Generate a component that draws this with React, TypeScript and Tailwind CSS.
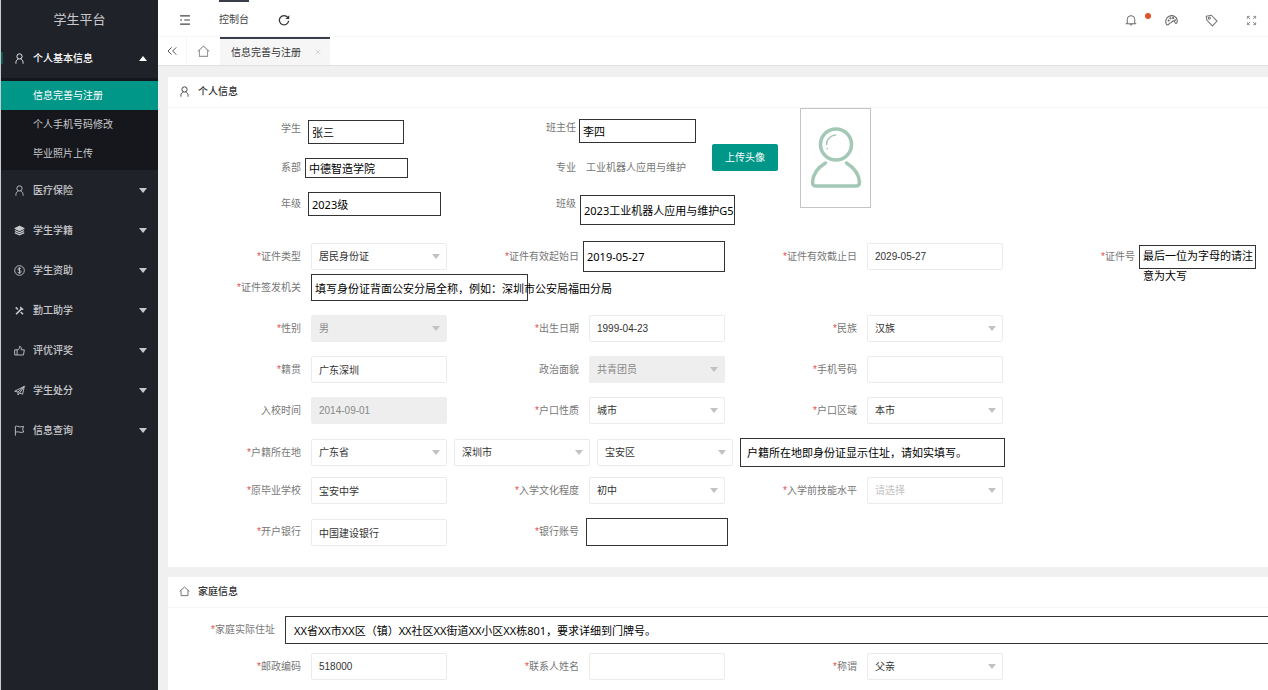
import React from 'react';
import { ChevronsLeft, X } from 'lucide-react';
import clsx from 'clsx';

type IconName = 'user' | 'layers' | 'dollar' | 'tools' | 'thumb' | 'plane' | 'flag' | 'home' | 'bell' | 'palette' | 'tag' | 'expand' | 'shrink' | 'refresh';

const ICONS: Record<IconName, React.ReactNode> = {
    user: (
        <>
            <circle cx="8" cy="5" r="3.8" />
            <path d="M2.8 15.5V14c0-2.800 1.600-4.600 3.600-5.300M9.600 8.700c2 .7 3.600 2.500 3.600 5.300v1.500" />
        </>
    ),
    layers: (
        <>
            <path d="M8 1.500 15 5 8 8.500 1 5z" fill="currentColor" />
            <path d="M1.200 8 8 11.300 14.800 8M1.200 11 8 14.300 14.800 11" strokeWidth="2" />
        </>
    ),
    dollar: (
        <>
            <circle cx="8" cy="8" r="7" />
            <path d="M10.3 5.8C10 4.8 9.1 4.5 8 4.5c-1.3 0-2.3.6-2.3 1.7C5.7 8.5 10.4 7.4 10.4 9.8c0 1.1-1.1 1.7-2.4 1.7-1.3 0-2.3-.5-2.5-1.5M8 3.2v9.6" />
        </>
    ),
    tools: (
        <>
            <path d="m3 13.5 8.500-8.500" strokeWidth="2.400" />
            <path d="M10 2.500c-.5 2 .5 3.700 3.500 3.500M2.500 3.500l3.200 3M9.800 10.300l3.400 3.200" strokeWidth="2.200" />
        </>
    ),
    thumb: <path d="M4.500 7H1v7.500h3.500m0-7.500v7.500m0-7.500h1.500c1.700-1.300 2-3 2-5 1.500 0 2.500 1 2.500 2.300V7H15l-1.200 7.500H4.500" />,
    plane: (
        <>
            <path d="M1 9 15 2l-2.500 11.500-4.300-2L5.800 14.500V10.200z" />
            <path d="M15 2 5.800 10.200M8.200 11.500 15 2" />
        </>
    ),
    flag: <path d="M2 15.500V2c2.500-1.200 4.800.8 6.800.8s3.200-.6 5.200-.8l-1.500 4L14 10.200c-2 .6-3.500.8-5.500.3s-4-.8-6.500-.1" />,
    home: <path d="M1 7.800 8 1.500l7 6.300M3 6.500V14h10V6.500" />,
    bell: (
        <>
            <path d="M1 13h14M3 13V7.200a5 5 0 0 1 10 0V13" />
            <path d="M6.500 13.500c.3 1.800 2.700 1.800 3 0" />
        </>
    ),
    palette: (
        <>
            <path d="M1.800 12.800C-.2 9 1.300 4.400 5.100 2.700c4.400-1.900 9.400.5 9.900 4.800.3 2.500-.7 4.200-1.700 4.100-1.300-.1-.8-2.600-2.300-3.100-1.700-.5-2.300 1.300-3.500 2.100-1.300.8-1.800.2-2.400 1.300-.5 1.100-2 2.400-3.300.9z" />
            <circle cx="4.500" cy="8" r=".7" />
            <circle cx="6.700" cy="5.300" r=".7" />
            <circle cx="10" cy="5" r=".7" />
            <circle cx="12.500" cy="7.500" r=".5" />
        </>
    ),
    tag: (
        <>
            <path d="M1.500 2.800 7.800 1.500l7 7.200-5.600 6-7-7.200z" />
            <circle cx="5.300" cy="5" r="1.300" />
        </>
    ),
    expand: <path d="M2 5.500V2h3.500M2 2l4 4M10.500 2H14v3.500M14 2l-4 4M2 10.500V14h3.500M2 14l4-4M14 10.500V14h-3.500M14 14l-4-4" />,
    shrink: <path d="M1.500 2.500h13M7 8h7.500M1.500 13.500h13M1.500 8h2.500" strokeWidth="1.600" />,
    refresh: (
        <>
            <path d="M13 4.500a6.200 6.200 0 1 0 1.200 4.500" strokeWidth="1.700" />
            <path d="M15 1.500v5h-5z" fill="currentColor" stroke="none" />
        </>
    ),
};

const Icon: React.FC<{ name: IconName; className?: string }> = ({ name, className }) => (
    <svg
        viewBox="0 0 16 16"
        fill="none"
        stroke="currentColor"
        strokeWidth="1.3"
        className={clsx('shrink-0', className)}
        aria-hidden="true"
    >
        {ICONS[name]}
    </svg>
);

const Triangle: React.FC<{ className?: string }> = ({ className }) => (
    <svg viewBox="0 0 8 5" className={clsx('w-2 h-[5px] fill-current', className)} aria-hidden="true">
        <path d="M0 0h8L4 5z" />
    </svg>
);

const MENU: { icon: IconName; label: string }[] = [
    { icon: 'user', label: '医疗保险' },
    { icon: 'layers', label: '学生学籍' },
    { icon: 'dollar', label: '学生资助' },
    { icon: 'tools', label: '勤工助学' },
    { icon: 'thumb', label: '评优评奖' },
    { icon: 'plane', label: '学生处分' },
    { icon: 'flag', label: '信息查询' },
];

const Sidebar = () => (
    <aside className="w-[158px] shrink-0 pt-px bg-[#20222a] border-l border-[#c9cbce] text-[#c8c9cb]">
        <h1 className="h-[37px] flex items-center justify-center text-[13px]">学生平台</h1>
        <nav>
            <button className="w-full h-10 flex items-center text-white font-medium">
                <span className="w-[2px] h-3 bg-[#0c5a55]" />
                <Icon name="user" className="w-[11px] h-[11px] ml-[11px] mr-2" />
                个人基本信息
                <Triangle className="ml-auto mr-[11px] rotate-180" />
            </button>
            <div className="bg-[#15171c] pt-[3px] pb-[2px]">
                <a href="#register" className="flex items-center h-[29px] pl-8 bg-[#009688] text-white">信息完善与注册</a>
                <a href="#phone" className="flex items-center h-[29px] pl-8">个人手机号码修改</a>
                <a href="#photo" className="flex items-center h-[29px] pl-8">毕业照片上传</a>
            </div>
            {MENU.map((item) => (
                <button key={item.label} className="w-full h-10 flex items-center font-medium">
                    <Icon name={item.icon} className="w-[11px] h-[11px] ml-[13px] mr-2" />
                    {item.label}
                    <Triangle className="ml-auto mr-[11px]" />
                </button>
            ))}
        </nav>
    </aside>
);

const Header = () => (
    <header className="bg-white text-[#444]">
        <div className="h-[37px] flex items-start border-b border-[#f6f6f6]">
            <button aria-label="收起菜单" className="w-[54px] h-full pt-1 flex items-center justify-center">
                <Icon name="shrink" className="w-3 h-3" />
            </button>
            <a href="#console" className="h-full pt-px ml-[7px] flex items-center border-t-2 border-[#393d49]">控制台</a>
            <button aria-label="刷新" className="w-[70px] h-full pt-1 flex items-center justify-center text-[#333]">
                <Icon name="refresh" className="w-3 h-3" />
            </button>
            <div className="ml-auto h-full pt-1 -mr-[3px] flex items-center text-[#666]">
                <button aria-label="消息" className="relative w-10 h-full flex items-center justify-center">
                    <Icon name="bell" className="w-3 h-3" />
                    <span className="absolute left-[34px] top-[9px] w-[6px] h-[6px] rounded-full bg-[#dd5529]" />
                </button>
                <button aria-label="主题" className="w-10 h-full flex items-center justify-center">
                    <Icon name="palette" className="w-[13px] h-[13px]" />
                </button>
                <button aria-label="便签" className="w-10 h-full flex items-center justify-center text-[#777]">
                    <Icon name="tag" className="w-[13px] h-[13px]" />
                </button>
                <button aria-label="全屏" className="w-10 h-full flex items-center justify-center text-[#888]">
                    <Icon name="expand" className="w-[11px] h-[11px]" />
                </button>
            </div>
        </div>
        <div className="h-[29px] flex border-b border-[#e0e0e0]">
            <button aria-label="向左" className="w-[29px] flex items-center justify-center border-r border-[#f6f6f6]">
                <ChevronsLeft className="w-4 h-4 text-[#555]" strokeWidth={1.5} />
            </button>
            <a href="#home" aria-label="首页" className="w-[33px] flex items-center justify-center text-[#999]">
                <Icon name="home" className="w-[13px] h-[13px]" />
            </a>
            <div className="w-[110px] pl-[11px] pr-2 flex items-center justify-between bg-[#f6f6f6] border-t-2 border-[#393d49] text-[#333]">
                信息完善与注册
                <button aria-label="关闭" className="text-[#c2c2c2]">
                    <X className="w-2 h-2" />
                </button>
            </div>
        </div>
    </header>
);

const CARD_HEADER = 'h-[31px] flex items-center gap-2 pl-[11px] pb-px border-b border-[#f6f6f6] font-medium text-[#333]';
const HINT_FONT = 'text-black text-[11px] font-["Noto_Sans","Noto_Sans_CJK_SC",sans-serif]';
const BOX = 'border border-[#333] bg-white px-[3px] text-black text-[11px] font-["Noto_Sans","Noto_Sans_CJK_SC",sans-serif]';
const INPUT = 'w-[136px] h-[27px] px-[7px] border rounded-xs';

const tone = (disabled?: boolean) =>
    disabled ? 'bg-[#eeeeee] border-[#eeeeee] text-[#888]' : 'bg-white border-[#ebebeb] text-[#333]';

interface FieldProps {
    id: string;
    label: string;
    required?: boolean;
    gap?: string;
    align?: string;
    labelWidth?: string;
    children: React.ReactNode;
}

const Field: React.FC<FieldProps> = ({ id, label, required, gap = 'gap-[10px]', align = 'items-center', labelWidth = 'w-[132px]', children }) => (
    <div className={clsx('flex', gap, align)}>
        <label htmlFor={id} className={clsx('shrink-0 text-right leading-[18px] whitespace-nowrap text-[#777]', labelWidth)}>
            {required && <span className="text-[#e05050]">*</span>}
            {label}
        </label>
        {children}
    </div>
);

const TextInput: React.FC<{ id: string; value?: string; disabled?: boolean }> = ({ id, value = '', disabled }) => (
    <input id={id} defaultValue={value} disabled={disabled} className={clsx(INPUT, tone(disabled))} />
);

const BoxInput: React.FC<{ id: string; value?: string; className: string }> = ({ id, value = '', className }) => (
    <input id={id} defaultValue={value} className={clsx(BOX, className)} />
);

interface SelectProps {
    id: string;
    value: string;
    disabled?: boolean;
    empty?: boolean;
    ariaLabel?: string;
}

const Select: React.FC<SelectProps> = ({ id, value, disabled, empty, ariaLabel }) => (
    <div className="relative">
        <select
            id={id}
            disabled={disabled}
            aria-label={ariaLabel}
            className={clsx(INPUT, 'block appearance-none opacity-100', empty ? 'bg-white border-[#ebebeb] text-[#c2c2c2]' : tone(disabled))}
        >
            <option>{value}</option>
        </select>
        <Triangle className="absolute right-[7px] top-[11px] text-[#c2c2c2] pointer-events-none" />
    </div>
);

const Avatar = () => (
    <div className="w-[71px] h-[100px] border border-[#c4c4c4] flex items-center justify-center">
        <svg viewBox="0 0 52 62" className="w-[52px] h-[62px]" fill="none" stroke="#a3c9b6" strokeWidth="3.5" strokeLinecap="round" aria-label="头像">
            <circle cx="26" cy="17.5" r="15.5" />
            <path d="M16.5 17.5a9.5 9.5 0 0 1 9-9.5M17 21.5l.2.3" strokeWidth="1.5" />
            <path d="M15.5 36C7 41 3 48 2.500 55c0 2.500 1 4 3.500 4h40c2.500 0 3.500-1.500 3.500-4C49 48 44.500 41 36.500 36" />
        </svg>
    </div>
);

const PersonalCard = () => (
    <section className="bg-white">
        <h2 className={CARD_HEADER}>
            <Icon name="user" className="w-[11px] h-[11px]" />
            个人信息
        </h2>
        <div className="pl-px pb-[21px]">
            <div className="flex items-start h-[133px]">
                <div className="w-[275px] pt-3 flex flex-col gap-[14px]">
                    <Field id="student" label="学生" gap="gap-[7px]" align="items-start">
                        <BoxInput id="student" value="张三" className="w-[96px] h-6" />
                    </Field>
                    <Field id="dept" label="系部" gap="gap-1">
                        <BoxInput id="dept" value="中德智造学院" className="w-[103px] h-5" />
                    </Field>
                    <Field id="grade" label="年级" gap="gap-[7px]">
                        <BoxInput id="grade" value="2023级" className="w-[133px] h-6" />
                    </Field>
                </div>
                <div className="w-[268px] pt-[11px] flex flex-col gap-4">
                    <Field id="teacher" label="班主任" gap="gap-[3px]" align="items-start">
                        <BoxInput id="teacher" value="李四" className="w-[117px] h-6" />
                    </Field>
                    <Field id="major" label="专业" align="items-start">
                        <output id="major" className="h-5 leading-[18px] text-[#777]">工业机器人应用与维护</output>
                    </Field>
                    <Field id="class" label="班级" gap="gap-1" align="items-start">
                        <BoxInput id="class" value="2023工业机器人应用与维护G5" className="w-[155px] h-[30px] pr-0" />
                    </Field>
                </div>
                <button className="mt-9 mr-[22px] w-[66px] h-[27px] rounded-xs bg-[#009688] text-white">上传头像</button>
                <Avatar />
            </div>

            <div className="flex items-center h-[31px] mb-[2px]">
                <Field id="idType" label="证件类型" required>
                    <Select id="idType" value="居民身份证" />
                </Field>
                <Field id="idFrom" label="证件有效起始日" required gap="gap-1">
                    <BoxInput id="idFrom" value="2019-05-27" className="w-[142px] h-[31px]" />
                </Field>
                <Field id="idTo" label="证件有效截止日" required>
                    <TextInput id="idTo" value="2029-05-27" />
                </Field>
                <Field id="idNo" label="证件号" required gap="gap-1">
                    {/* the hint runs on below its frame */}
                    <div className="w-[117px] h-6 border border-[#333]">
                        <textarea
                            id="idNo"
                            defaultValue="最后一位为字母的请注意为大写"
                            className={clsx(HINT_FONT, 'block w-full h-10 pl-[3px] resize-none overflow-hidden bg-transparent leading-5')}
                        />
                    </div>
                </Field>
            </div>
            <div className="flex mb-[14px]">
                <Field id="issuer" label="证件签发机关" required>
                    <div className="w-[217px] h-[27px] border border-[#333]">
                        <input
                            id="issuer"
                            defaultValue="填写身份证背面公安分局全称，例如：深圳市公安局福田分局"
                            className={clsx(HINT_FONT, 'block w-[310px] h-full px-[3px] bg-transparent')}
                        />
                    </div>
                </Field>
            </div>
            <div className="flex mb-[14px]">
                <Field id="gender" label="性别" required>
                    <Select id="gender" value="男" disabled />
                </Field>
                <Field id="birth" label="出生日期" required>
                    <TextInput id="birth" value="1999-04-23" />
                </Field>
                <Field id="nation" label="民族" required>
                    <Select id="nation" value="汉族" />
                </Field>
            </div>
            <div className="flex mb-[14px]">
                <Field id="origin" label="籍贯" required>
                    <TextInput id="origin" value="广东深圳" />
                </Field>
                <Field id="politics" label="政治面貌">
                    <Select id="politics" value="共青团员" disabled />
                </Field>
                <Field id="mobile" label="手机号码" required>
                    <TextInput id="mobile" />
                </Field>
            </div>
            <div className="flex mb-[14px]">
                <Field id="enrolled" label="入校时间">
                    <TextInput id="enrolled" value="2014-09-01" disabled />
                </Field>
                <Field id="hukouType" label="户口性质" required>
                    <Select id="hukouType" value="城市" />
                </Field>
                <Field id="hukouArea" label="户口区域" required>
                    <Select id="hukouArea" value="本市" />
                </Field>
            </div>
            <div className="flex items-center gap-[7px] mb-[10px]">
                <Field id="province" label="户籍所在地" required>
                    <Select id="province" value="广东省" />
                </Field>
                <Select id="city" value="深圳市" ariaLabel="市" />
                <Select id="district" value="宝安区" ariaLabel="区" />
                <p className={clsx(BOX, 'w-[265px] h-[29px] pl-[6px] pt-px flex items-center')}>户籍所在地即身份证显示住址，请如实填写。</p>
            </div>
            <div className="flex mb-[14px]">
                <Field id="school" label="原毕业学校" required>
                    <TextInput id="school" value="宝安中学" />
                </Field>
                <Field id="education" label="入学文化程度" required>
                    <Select id="education" value="初中" />
                </Field>
                <Field id="skill" label="入学前技能水平" required>
                    <Select id="skill" value="请选择" empty />
                </Field>
            </div>
            <div className="flex">
                <Field id="bank" label="开户银行" required>
                    <TextInput id="bank" value="中国建设银行" />
                </Field>
                <Field id="account" label="银行账号" required gap="gap-[7px]">
                    <BoxInput id="account" className="w-[142px] h-7" />
                </Field>
            </div>
        </div>
    </section>
);

const FamilyCard = () => (
    <section className="bg-white grow">
        <h2 className={CARD_HEADER}>
            <Icon name="home" className="w-[11px] h-[11px] text-[#666]" />
            家庭信息
        </h2>
        <div className="pl-px pt-2">
            <div className="mb-[9px]">
                <Field id="address" label="家庭实际住址" required labelWidth="w-[106px]">
                    <input
                        id="address"
                        defaultValue="XX省XX市XX区（镇）XX社区XX街道XX小区XX栋801，要求详细到门牌号。"
                        className={clsx(BOX, 'grow h-7 pl-2 border-r-0')}
                    />
                </Field>
            </div>
            <div className="flex">
                <Field id="zip" label="邮政编码" required>
                    <TextInput id="zip" value="518000" />
                </Field>
                <Field id="contact" label="联系人姓名" required>
                    <TextInput id="contact" />
                </Field>
                <Field id="relation" label="称谓" required>
                    <Select id="relation" value="父亲" />
                </Field>
            </div>
        </div>
    </section>
);

export default function App() {
    return (
        <div className='flex min-h-screen bg-[#f0f0f0] text-[10px] font-["Liberation_Sans","Noto_Sans_CJK_SC",sans-serif]'>
            <Sidebar />
            <div className="grow min-w-0 flex flex-col">
                <Header />
                <main className="grow flex flex-col gap-[10px] pt-[11px] pl-[10px]">
                    <PersonalCard />
                    <FamilyCard />
                </main>
            </div>
        </div>
    );
}
